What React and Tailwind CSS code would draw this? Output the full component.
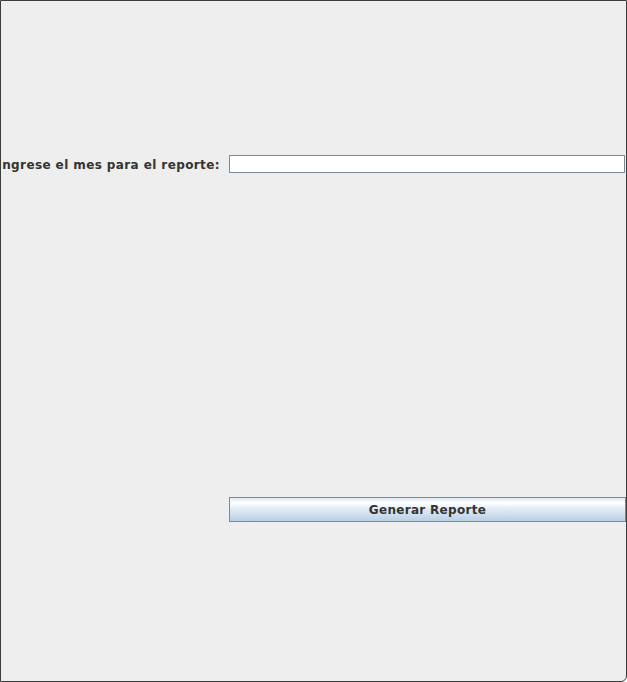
export default function App() {
  return (
    <div
      className="w-[627px] h-[682px] bg-[#eeeeee] border border-[#3c3c3c] rounded-br-[6px] overflow-hidden text-[#333333]"
      style={{ fontFamily: '"DejaVu Sans", sans-serif' }}
    >
      <div className="grid grid-cols-[228px_1fr] pt-[154px]">
        {/* Month row */}
        <div className="h-[18px] overflow-hidden flex justify-end items-center pr-[9px]">
          <span className="whitespace-nowrap text-[12px] font-bold leading-none tracking-[0.4px] pt-[2px]">
            Ingrese el mes para el reporte:
          </span>
        </div>
        <div className="h-[18px] pr-[1px]">
          <input
            type="text"
            className="block w-full h-[18px] bg-white border border-[#7a8a99] outline-none px-1 text-[12px]"
          />
        </div>

        {/* Button row */}
        <div className="mt-[324px]" />
        <div className="mt-[324px]">
          <button className="block w-full h-[25px] border border-[#7a8a99] bg-[linear-gradient(to_bottom,#dde8f3_0%,#ffffff_22%,#e4edf6_45%,#b8cfe5_100%)] text-[12px] font-bold tracking-[0.3px] text-[#333333] leading-none">
            Generar Reporte
          </button>
        </div>
      </div>
    </div>
  )
}
